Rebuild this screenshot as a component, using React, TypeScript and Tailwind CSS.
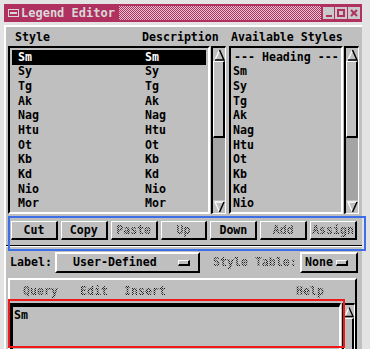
import React from "react";

const rows = ["Sm", "Sy", "Tg", "Ak", "Nag", "Htu", "Ot", "Kb", "Kd", "Nio", "Mor"];
const avail = ["--- Heading ---", "Sm", "Sy", "Tg", "Ak", "Nag", "Htu", "Ot", "Kb", "Kd", "Nio"];

const stip =
  "bg-[image:repeating-conic-gradient(#1a1a1a_0_25%,transparent_0_50%)] bg-[length:2px_2px] bg-clip-text text-transparent";

function Arrow({ down }: { down?: boolean }) {
  return (
    <svg width="11" height="12" viewBox="0 0 11 12" className="block">
      {down ? (
        <>
          <polygon points="1,1 10,1 5.5,11" fill="#bfbfbf" />
          <polyline points="5.5,11 1,1 10,1" fill="none" stroke="#ffffff" strokeWidth="1.3" />
          <line x1="10" y1="1" x2="5.5" y2="11" stroke="#000" strokeWidth="1.5" />
        </>
      ) : (
        <>
          <polygon points="5.5,1 10,11 1,11" fill="#bfbfbf" />
          <line x1="1" y1="11" x2="5.5" y2="1" stroke="#ffffff" strokeWidth="1.3" />
          <polyline points="5.5,1 10,11 1,11" fill="none" stroke="#000" strokeWidth="1.5" />
        </>
      )}
    </svg>
  );
}

function VScroll({ className, thumbClass, noDown }: { className: string; thumbClass: string; noDown?: boolean }) {
  return (
    <div
      className={`flex flex-col border-t-2 border-l-2 border-t-black border-l-black border-r border-b border-r-white border-b-white bg-[#a4a4a4] ${className}`}
    >
      <div className="h-[13px] shrink-0 bg-[#bfbfbf] flex items-center justify-center">
        <Arrow />
      </div>
      <div
        className={`shrink-0 bg-[#bfbfbf] border-t border-l border-t-white border-l-white border-r-2 border-b-2 border-r-black border-b-black ${thumbClass}`}
      />
      <div className="flex-1" />
      {!noDown && (
        <div className="h-[13px] shrink-0 bg-[#bfbfbf] flex items-center justify-center">
          <Arrow down />
        </div>
      )}
    </div>
  );
}

function Btn({ label, disabled }: { label: string; disabled?: boolean }) {
  return (
    <div className="flex-1 h-[19px] flex items-center justify-center border-t border-l border-t-white border-l-white border-r-2 border-b-2 border-r-black border-b-black">
      <span className={disabled ? `font-bold ${stip}` : "font-bold text-black"}>{label}</span>
    </div>
  );
}

function OptionBtn({ label, className, pl }: { label: string; className: string; pl: string }) {
  return (
    <div
      className={`h-[21px] flex items-center border-t-2 border-l-2 border-t-white border-l-white border-r-2 border-b-2 border-r-black border-b-black ${className}`}
    >
      <span className={`font-bold ${pl}`}>{label}</span>
      <div className="ml-auto mr-[8px] w-[12px] h-[6px] bg-[#bfbfbf] border-t border-l border-t-white border-l-white border-r-2 border-b-2 border-r-black border-b-black" />
    </div>
  );
}

export default function App() {
  return (
    <div className="w-[370px] h-[349px] overflow-hidden bg-[#e3e3e3] pt-[4px] pl-[4px] font-['DejaVu_Sans_Mono',monospace] text-[11.6px] leading-[13px] text-black">
      <div className="w-[358px]">
        {/* title bar */}
        <div className="h-[18px] bg-[#b03060] flex items-center pl-[4px] pr-[2px]">
          <svg width="11" height="8" viewBox="0 0 11 8" className="block">
            <rect x="0.5" y="0.5" width="10" height="7" fill="none" stroke="#d8d8d8" />
            <rect x="2" y="3" width="7" height="2" fill="#d8d8d8" />
          </svg>
          <span className="ml-[2px] text-[#d9d9d9] font-bold text-[12px]">Legend Editor</span>
          <div className="flex-1 h-[14px] ml-[4px] mr-[2px] bg-[image:repeating-conic-gradient(#b03060_0_25%,#e8c6d2_0_50%)] bg-[length:2px_2px]" />
          <div className="flex gap-[1px]">
            <div className="w-[11px] h-[12px] bg-[#c9c9c9] flex items-end justify-center pb-[2px]">
              <div className="w-[6px] h-[2px] bg-[#b03060]" />
            </div>
            <div className="w-[12px] h-[12px] bg-[#c9c9c9] flex items-center justify-center">
              <div className="w-[8px] h-[8px] border-2 border-[#b03060]" />
            </div>
            <div className="w-[12px] h-[12px] bg-[#c9c9c9] flex items-center justify-center">
              <svg width="8" height="8" viewBox="0 0 8 8" className="block">
                <path d="M1 1 L7 7 M7 1 L1 7" stroke="#b03060" strokeWidth="2" />
              </svg>
            </div>
          </div>
        </div>

        {/* body */}
        <div className="mt-[3px] h-[330px] bg-[#bfbfbf] border-t-2 border-l-2 border-t-white border-l-white">
          {/* headers */}
          <div className="mt-[4px] h-[13px] flex font-bold">
            <span className="ml-[9px] w-[127px]">Style</span>
            <span className="w-[89px]">Description</span>
            <span>Available Styles</span>
          </div>

          {/* lists */}
          <div className="mt-[2px] h-[168px] flex pl-[2px]">
            <div className="w-[202px] h-full border-2 border-t-black border-l-black border-r-white border-b-white px-[2px] pt-[2px] font-bold">
              {rows.map((r, i) => (
                <div key={i} className={`h-[14.67px] flex items-center pl-[6px] ${i === 0 ? "bg-black text-white" : ""}`}>
                  <span className="w-[127px]">{r}</span>
                  <span>{r}</span>
                </div>
              ))}
            </div>
            <VScroll className="ml-[1px] w-[15px] h-full" thumbClass="h-[77px]" />
            <div className="ml-[3px] w-[114px] h-full border-2 border-t-black border-l-black border-r-white border-b-white px-[2px] pt-[2px] font-bold">
              {avail.map((r, i) => (
                <div key={i} className={`h-[14.67px] flex items-center ${i === 0 ? "pl-[1px]" : ""}`}>
                  <span>{r}</span>
                </div>
              ))}
            </div>
            <VScroll className="ml-[1px] w-[15px] h-full" thumbClass="h-[77px]" />
          </div>

          {/* action buttons */}
          <div className="mt-[7px] ml-[5px] w-[346px] flex gap-[3px]">
            <Btn label="Cut" />
            <Btn label="Copy" />
            <Btn label="Paste" disabled />
            <Btn label="Up" disabled />
            <Btn label="Down" />
            <Btn label="Add" disabled />
            <Btn label="Assign" disabled />
          </div>

          {/* separator */}
          <div className="mt-[5px] h-[2px] border-t border-t-[#000] border-b border-b-white" />

          {/* label row */}
          <div className="mt-[5px] flex items-center">
            <span className="ml-[4px] w-[45px] font-bold">Label:</span>
            <OptionBtn label="User-Defined" className="w-[145px]" pl="pl-[16px]" />
            <span className={`ml-[13px] w-[87px] font-bold ${stip}`}>Style Table:</span>
            <OptionBtn label="None" className="w-[58px]" pl="pl-[3px]" />
          </div>

          {/* bottom frame */}
          <div className="mt-[5px] ml-[2px] w-[349px] h-[80px] border-t-2 border-l-2 border-t-white border-l-white border-r-2 border-r-black">
            <div className="h-[23px] flex items-center font-bold">
              <span className={`ml-[13px] w-[57px] ${stip}`}>Query</span>
              <span className={`w-[44px] ${stip}`}>Edit</span>
              <span className={`${stip}`}>Insert</span>
              <span className={`ml-auto mr-[31px] ${stip}`}>Help</span>
            </div>
            <div className="flex h-[60px]">
              <div className="w-[332px] h-full border-t-4 border-l-[3px] border-t-black border-l-black border-r-2 border-r-white pl-[1px] pt-[2px] font-bold">
                Sm
              </div>
              <VScroll className="ml-[1px] w-[13px] h-full" thumbClass="h-[40px]" noDown />
            </div>
          </div>
        </div>
      </div>

      {/* annotation overlays */}
      <div className="absolute left-[8px] top-[216px] w-[358px] h-[35px] border-2 border-[#3c6ee8]" />
      <div className="absolute left-[8px] top-[299px] w-[337px] h-[49px] border-2 border-[#ee1a1a]" />
    </div>
  );
}
